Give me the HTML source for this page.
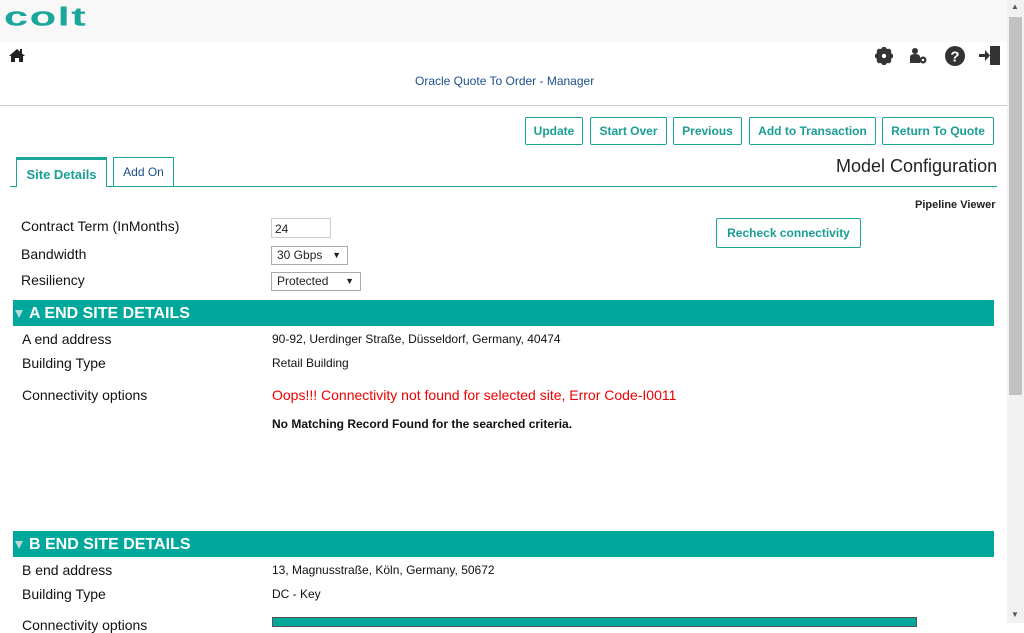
<!DOCTYPE html>
<html><head><meta charset="utf-8"><style>
*{margin:0;padding:0;box-sizing:border-box}
body{width:1024px;height:623px;overflow:hidden;background:#fff;font-family:"Liberation Sans",Arial,sans-serif;position:relative;color:#222}
.a{position:absolute;white-space:nowrap}
.btn{position:absolute;top:117px;height:28px;border:1px solid #1aa599;border-radius:2px;color:#1a9e93;font-weight:bold;font-size:12px;line-height:26px;text-align:center;background:#fff}
.lbl{position:absolute;font-size:14px;color:#111}
.val{position:absolute;font-size:12px;color:#111}
.bar{position:absolute;left:13px;width:981px;height:26px;background:#00a79b;color:#fff;font-weight:bold;font-size:16px;line-height:27px;padding-left:16px}
.bar:before{content:"";position:absolute;left:2px;top:10px;border-left:4px solid transparent;border-right:4px solid transparent;border-top:8px solid #b7dcd8}
.sel{position:absolute;height:19px;border:1px solid #aaa;font-size:12px;line-height:17px;padding-left:5px;background:#fff}
.sel:after{content:"▼";position:absolute;right:6px;font-size:9px}
</style></head><body>
<div class="a" style="left:0;top:0;width:1007px;height:42px;background:#f8f8f8"></div>
<div class="a" style="left:4px;top:1px;font-size:30px;font-weight:bold;color:#1aa69a;letter-spacing:1px;transform:scale(1.45,0.85);transform-origin:0 50%">colt</div>
<svg class="a" style="left:9px;top:48px" width="16" height="15" viewBox="0 0 16 15"><path d="M8 1L0 8h2v6h4v-4h4v4h4V8h2z" fill="#222"/><rect x="11" y="1" width="2" height="4" fill="#222"/></svg>
<div class="a" style="left:415px;top:74px;font-size:12px;color:#1c4f8c">Oracle Quote To Order - Manager</div>
<svg class="a" style="left:874px;top:46px" width="20" height="20" viewBox="0 0 20 20"><circle cx="10" cy="10" r="6.5" fill="none" stroke="#333" stroke-width="3"/><g stroke="#333" stroke-width="3.5"><line x1="10" y1="1" x2="10" y2="19"/><line x1="1" y1="10" x2="19" y2="10"/><line x1="3.6" y1="3.6" x2="16.4" y2="16.4"/><line x1="16.4" y1="3.6" x2="3.6" y2="16.4"/></g><circle cx="10" cy="10" r="4" fill="#333"/><circle cx="10" cy="10" r="2.2" fill="#fff"/></svg>
<svg class="a" style="left:909px;top:47px" width="20" height="19" viewBox="0 0 20 19"><circle cx="6" cy="4" r="3" fill="#333"/><path d="M1 16V10q0-3 5-3t5 3v6z" fill="#333"/><circle cx="14" cy="13" r="3.5" fill="#333"/><circle cx="14" cy="13" r="1.3" fill="#fff"/></svg>
<svg class="a" style="left:945px;top:46px" width="20" height="20" viewBox="0 0 20 20"><circle cx="10" cy="10" r="10" fill="#333"/><text x="10" y="15.5" font-size="15" font-weight="bold" fill="#fff" text-anchor="middle" font-family="Liberation Sans">?</text></svg>
<svg class="a" style="left:979px;top:45px" width="22" height="21" viewBox="0 0 22 21"><path d="M11 1h10v19H11z" fill="#333"/><path d="M0 9h6V5l5 5.5-5 5.5v-4H0z" fill="#333"/></svg>
<div class="a" style="left:0;top:105px;width:1007px;height:1px;background:#ccc"></div>
<div class="btn" style="left:525px;width:58px">Update</div>
<div class="btn" style="left:590px;width:77px">Start Over</div>
<div class="btn" style="left:673px;width:69px">Previous</div>
<div class="btn" style="left:749px;width:127px">Add to Transaction</div>
<div class="btn" style="left:882px;width:112px">Return To Quote</div>
<div class="a" style="left:836px;top:156px;font-size:18px;color:#222">Model Configuration</div>
<div class="a" style="left:10px;top:186px;width:987px;height:1px;background:#1aa599"></div>
<div class="a" style="left:16px;top:157px;width:91px;height:30px;border:1px solid #1aa599;border-top:3px solid #1aa599;border-bottom:none;background:#fff;color:#1a9e93;font-weight:bold;font-size:13px;text-align:center;line-height:29px">Site Details</div>
<div class="a" style="left:113px;top:157px;width:61px;height:29px;border:1px solid #1aa599;border-bottom:none;color:#1c4f8c;font-size:12px;text-align:center;line-height:28px">Add On</div>
<div class="a" style="left:915px;top:199px;font-size:11px;font-weight:bold;color:#222">Pipeline Viewer</div>
<div class="btn" style="left:716px;top:218px;width:145px;height:30px;line-height:28px">Recheck connectivity</div>
<div class="lbl" style="left:21px;top:218px">Contract Term (InMonths)</div>
<div class="lbl" style="left:21px;top:246px">Bandwidth</div>
<div class="lbl" style="left:21px;top:272px">Resiliency</div>
<div class="a" style="left:271px;top:218px;width:60px;height:20px;border:1px solid #ccc;font-size:12px;padding:3px 0 0 3px">24</div>
<div class="sel" style="left:271px;top:246px;width:77px">30 Gbps</div>
<div class="sel" style="left:271px;top:272px;width:90px">Protected</div>
<div class="bar" style="top:300px">A END SITE DETAILS</div>
<div class="lbl" style="left:22px;top:331px">A end address</div>
<div class="val" style="left:272px;top:332px">90-92, Uerdinger Straße, Düsseldorf, Germany, 40474</div>
<div class="lbl" style="left:22px;top:355px">Building Type</div>
<div class="val" style="left:272px;top:356px">Retail Building</div>
<div class="lbl" style="left:22px;top:387px">Connectivity options</div>
<div class="a" style="left:272px;top:387px;font-size:14px;color:#e00">Oops!!! Connectivity not found for selected site, Error Code-I0011</div>
<div class="a" style="left:272px;top:417px;font-size:12px;font-weight:bold;color:#111">No Matching Record Found for the searched criteria.</div>
<div class="bar" style="top:531px">B END SITE DETAILS</div>
<div class="lbl" style="left:22px;top:562px">B end address</div>
<div class="val" style="left:272px;top:563px">13, Magnusstraße, Köln, Germany, 50672</div>
<div class="lbl" style="left:22px;top:586px">Building Type</div>
<div class="val" style="left:272px;top:587px">DC - Key</div>
<div class="lbl" style="left:22px;top:617px">Connectivity options</div>
<div class="a" style="left:272px;top:617px;width:645px;height:10px;background:#00a79b;border:1px solid #555"></div>
<div class="a" style="left:1007px;top:0;width:17px;height:623px;background:#f1f1f1"></div>
<div class="a" style="left:1009px;top:17px;width:13px;height:378px;background:#c1c1c1"></div>
<div class="a" style="left:1011px;top:2px;font-size:8px;color:#555">▲</div>
<div class="a" style="left:1011px;top:610px;font-size:8px;color:#555">▼</div>
</body></html>
